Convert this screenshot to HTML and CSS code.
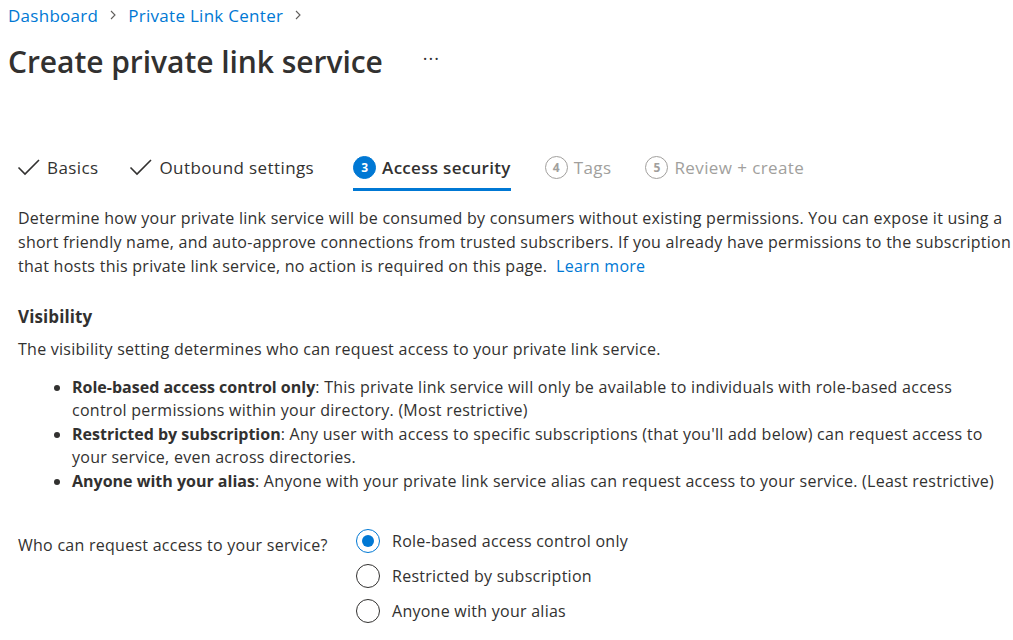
FILE: index.html
```html
<!DOCTYPE html>
<html lang="en">
<head>
<meta charset="utf-8">
<title>Create private link service</title>
<link rel="stylesheet" href="styles.css">
</head>
<body>
<div class="page">
  <nav class="crumbs">
    <a class="crumb" href="#">Dashboard</a>
    <svg class="chev" viewBox="0 0 12 12" width="12" height="12"><path d="M4 2 L8 6 L4 10" fill="none" stroke="#605e5c" stroke-width="1.1"/></svg>
    <a class="crumb" href="#">Private Link Center</a>
    <svg class="chev" viewBox="0 0 12 12" width="12" height="12"><path d="M4 2 L8 6 L4 10" fill="none" stroke="#605e5c" stroke-width="1.1"/></svg>
  </nav>
  <header class="title-row">
    <h1 class="title">Create private link service</h1>
    <span class="more">···</span>
  </header>

  <div class="content">
    <div class="tabs">
      <div class="tab done">
        <svg class="check" viewBox="0 0 24 24" width="24" height="24"><path d="M1.5 12.5 L8 19 L22 5" fill="none" stroke="#323130" stroke-width="1.6"/></svg>
        <span>Basics</span>
      </div>
      <div class="tab done second">
        <svg class="check" viewBox="0 0 24 24" width="24" height="24"><path d="M1.5 12.5 L8 19 L22 5" fill="none" stroke="#323130" stroke-width="1.6"/></svg>
        <span>Outbound settings</span>
      </div>
      <div class="tab active">
        <span class="num filled">3</span>
        <span>Access security</span>
      </div>
      <div class="tab pending">
        <span class="num">4</span>
        <span>Tags</span>
      </div>
      <div class="tab pending">
        <span class="num">5</span>
        <span>Review + create</span>
      </div>
    </div>

    <p class="intro">Determine how your private link service will be consumed by consumers without existing permissions. You can expose it using a short friendly name, and auto-approve connections from trusted subscribers. If you already have permissions to the subscription that hosts this private link service, no action is required on this page.&nbsp; <a href="#" class="link">Learn more</a></p>

    <h2 class="section">Visibility</h2>
    <p class="desc">The visibility setting determines who can request access to your private link service.</p>

    <ul class="bullets">
      <li><b>Role-based access control only</b>: This private link service will only be available to individuals with role-based access control permissions within your directory. (Most restrictive)</li>
      <li><b>Restricted by subscription</b>: Any user with access to specific subscriptions (that you'll add below) can request access to your service, even across directories.</li>
      <li><b>Anyone with your alias</b>: Anyone with your private link service alias can request access to your service. (Least restrictive)</li>
    </ul>

    <div class="field">
      <div class="label">Who can request access to your service?</div>
      <div class="radios">
        <label class="radio"><span class="dot on"></span><span>Role-based access control only</span></label>
        <label class="radio"><span class="dot"></span><span>Restricted by subscription</span></label>
        <label class="radio"><span class="dot"></span><span>Anyone with your alias</span></label>
      </div>
    </div>
  </div>
</div>
</body>
</html>
```
FILE: styles.css
```css
* { box-sizing: border-box; }
html, body { margin: 0; padding: 0; background: #fff; }
body {
  font-family: "Open Sans", "Noto Sans", "Liberation Sans", sans-serif;
  color: #323130;
  font-size: 16px;
  letter-spacing: 0.26px;
}
.page { padding: 0 0 0 8px; }
.crumbs {
  display: flex;
  align-items: center;
  gap: 9px;
  height: 30px;
}
.crumb { color: #0078d4; text-decoration: none; font-size: 17px; letter-spacing: 0.28px; }
.chev { flex: none; }
.title-row {
  display: flex;
  align-items: center;
  gap: 40px;
  height: 62px;
}
.title {
  margin: 0;
  font-size: 30px;
  font-weight: 600;
  color: #323130;
  letter-spacing: -0.05px;
}
.more { font-size: 18px; color: #323130; letter-spacing: 1px; padding-bottom: 6px; }
.content { padding: 56px 0 0 10px; }
.tabs {
  display: flex;
  align-items: stretch;
  gap: 34px;
  height: 43px;
  font-size: 17px;
  letter-spacing: 0.4px;
}
.tab {
  display: flex;
  align-items: center;
  gap: 6px;
  border-bottom: 3px solid transparent;
  padding-bottom: 2px;
}
.tab.done { color: #323130; }
.tab.second { margin-left: -2px; }
.tab.active {
  margin-left: 5px;
  border-bottom-color: #0078d4;
  font-weight: 600;
  letter-spacing: 0.3px;
}
.tab.pending { color: #a19f9d; }
.check { flex: none; margin-left: -1px; }
.num {
  width: 23px; height: 23px;
  border-radius: 50%;
  border: 1.5px solid #a19f9d;
  display: inline-flex; align-items: center; justify-content: center;
  font-size: 12px; font-weight: 700;
  color: #a19f9d;
  letter-spacing: 0;
  flex: none;
}
.num.filled { background: #0078d4; border-color: #0078d4; color: #fff; }
.intro { margin: 15px 0 0 0; line-height: 24px; }
.link { color: #0078d4; text-decoration: none; }
.section { margin: 27px 0 0 0; font-size: 17px; font-weight: 700; line-height: 24px; letter-spacing: 0.1px; }
.desc { margin: 8px 0 0 0; line-height: 24px; }
.bullets { margin: 15px 0 0 0; padding: 0 12px 0 54px; line-height: 23.4px; }
.bullets b { font-weight: 700; letter-spacing: 0; }
.field { display: flex; margin-top: 36px; }
.label { width: 338px; padding-top: 5px; }
.radios { display: flex; flex-direction: column; gap: 11px; }
.radio { display: flex; align-items: center; gap: 12px; height: 24px; }
.dot {
  width: 24px; height: 24px; border-radius: 50%;
  border: 1px solid #323130;
  flex: none; display: inline-flex; align-items: center; justify-content: center;
}
.dot.on { border-color: #0078d4; }
.dot.on::after { content: ""; width: 12px; height: 12px; border-radius: 50%; background: #0078d4; }
```
